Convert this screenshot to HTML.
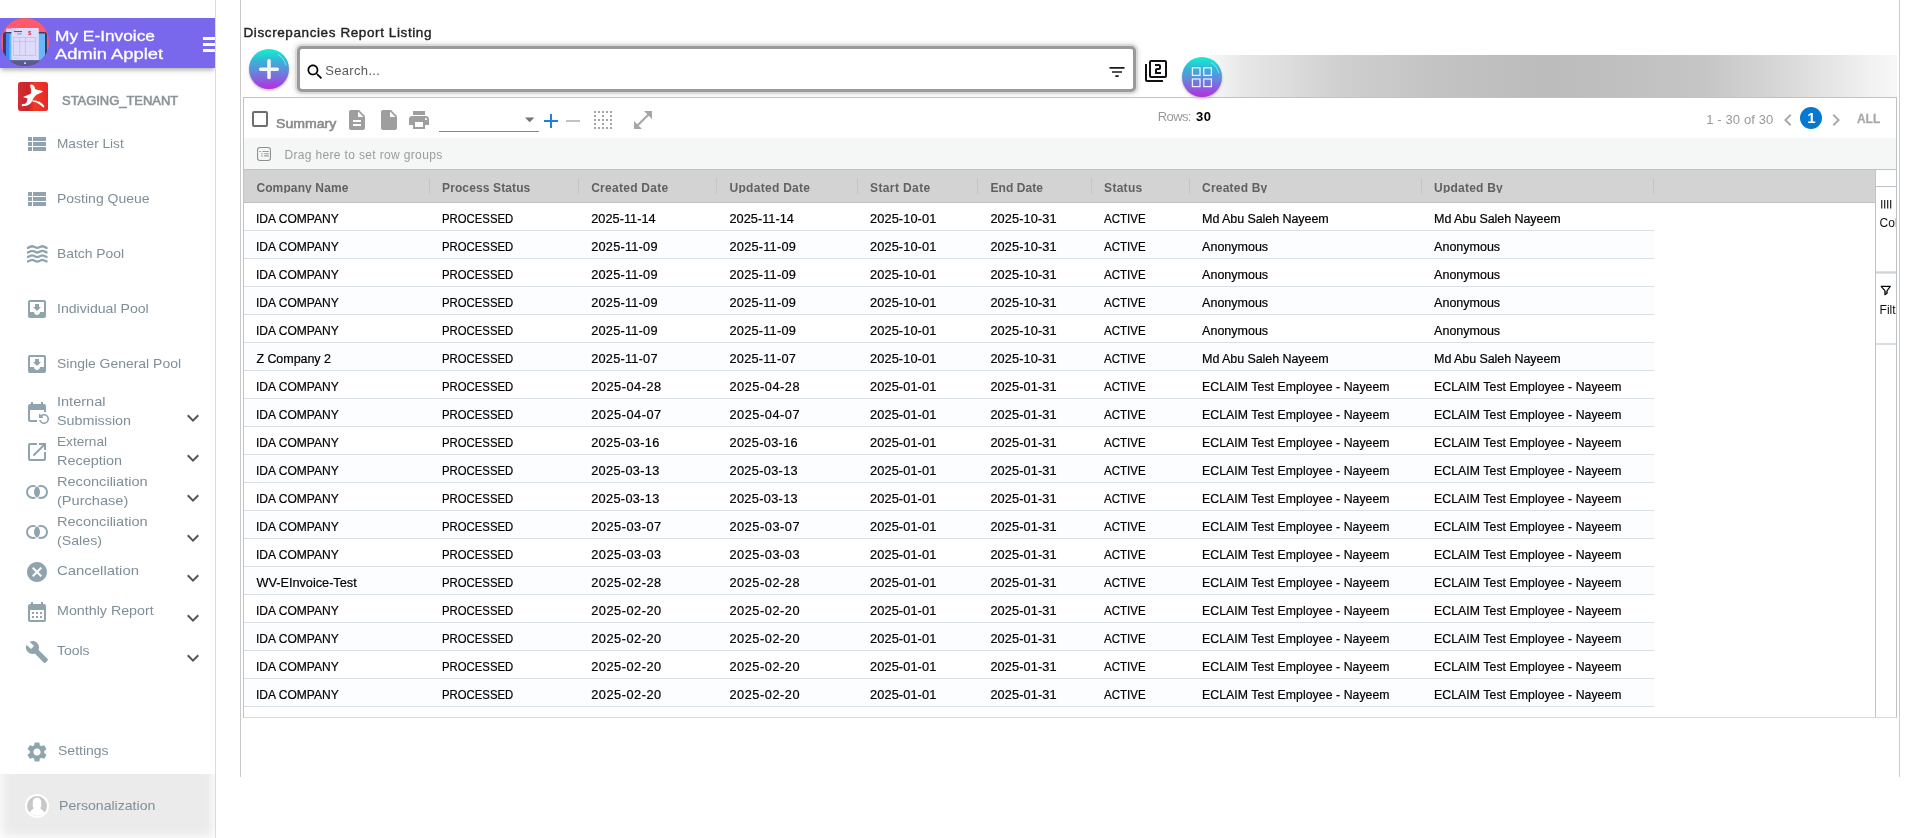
<!DOCTYPE html>
<html lang="en"><head><meta charset="utf-8"><title>Discrepancies Report Listing</title>
<style>
*{box-sizing:border-box;margin:0;padding:0}
html,body{width:1920px;height:838px;overflow:hidden;background:#fff}
body{position:relative;font-family:"Liberation Sans",sans-serif;font-size:12px;color:#000}
.t{position:absolute;white-space:nowrap;line-height:20px;height:20px}
.a{position:absolute}
svg{position:absolute;overflow:visible}
#root{position:absolute;left:0;top:0;width:1920px;height:838px;will-change:transform}
.c{-webkit-text-stroke:.2px #000}

</style></head>
<body>
<div id="root">
<div class="a" style="left:215px;top:0;width:1px;height:838px;background:#dcdcdc"></div>
<div class="a" style="left:0;top:0;width:215px;height:90px;overflow:hidden"><div class="a" style="left:0;top:18px;width:215px;height:50px;background:#7a68ec;box-shadow:0 3px 4px -1px rgba(0,0,0,.26),0 4px 6px 0 rgba(0,0,0,.06)"></div></div>
<svg style="left:1px;top:18px" width="48" height="48" viewBox="1 18 48 48">
<defs><clipPath id="avc"><circle cx="25" cy="42" r="24"/></clipPath></defs>
<g clip-path="url(#avc)">
<rect x="0" y="17" width="50" height="50" fill="#fe5a69"/>
<rect x="3" y="32" width="44" height="36" rx="3" fill="#3b3a5e"/>
<rect x="6" y="33.5" width="39" height="28" fill="#69b8ff"/>
<rect x="6" y="33.5" width="3.4" height="28" fill="#3d86fb"/>
<rect x="11.4" y="28" width="27.4" height="32.2" rx="1" fill="#dfdcfb"/>
<path d="M6.200 28.400h6v3.600h-6z" fill="#d6d3f8"/><path d="M11.400 29a1 1 0 0 1 1-1h3.600v3.600h-4.600z" fill="#cfccf6"/>
<rect x="14" y="31" width="8" height="1.1" fill="#e2203e"/>
<rect x="17" y="33.3" width="4.8" height="1.3" fill="#6fb2ff"/>
<text x="28" y="35" font-family="Liberation Sans, sans-serif" font-size="6" font-weight="700" fill="#e2203e">$</text>
<g fill="none" stroke="#bcb8ee" stroke-width=".7"><rect x="13.4" y="37.4" width="22.3" height="18"/><path d="M19.7 37.4v18M25.4 37.4v18M13.4 41.4h22.3"/></g>
<rect x="13.4" y="57.8" width="7.4" height=".6" fill="#c3bff0"/>
<rect x="0" y="60.2" width="50" height="8" fill="#5c5b8c"/>
<circle cx="25" cy="63.1" r=".9" fill="#fff"/>
</g></svg>
<span id="t1" class="t" style="left:55px;top:25px;font-size:15px;line-height:21px;height:21px;color:#fff;transform:scaleX(1.1534);transform-origin:0 0;-webkit-text-stroke:.3px #fff;">My E-Invoice</span>
<span id="t2" class="t" style="left:55px;top:43px;font-size:15px;line-height:21px;height:21px;color:#fff;transform:scaleX(1.2218);transform-origin:0 0;-webkit-text-stroke:.3px #fff;">Admin Applet</span>
<div class="a" style="left:203px;top:37px;width:12px;height:3px;background:#fff"></div>
<div class="a" style="left:203px;top:43px;width:12px;height:3px;background:#fff"></div>
<div class="a" style="left:203px;top:49px;width:12px;height:3px;background:#fff"></div>
<svg style="left:18px;top:81.5px" width="30" height="29" viewBox="0 0 30 29">
<defs><linearGradient id="tlg" x1="0" x2="1" y1="0" y2="0"><stop offset="0" stop-color="#d42d34"/><stop offset=".35" stop-color="#c9232b"/><stop offset=".55" stop-color="#ee3a28"/><stop offset="1" stop-color="#e72826"/></linearGradient></defs>
<rect width="30" height="29" rx="2.5" fill="url(#tlg)"/>
<g transform="translate(-8.1,-5.5) scale(.0501)"><path fill="#fff" d="M410,160 C450,150 500,180 505,255 C560,270 620,280 662,292 C650,320 560,335 510,385 C480,420 460,450 448,478 C520,470 640,500 690,595 L668,622 C620,570 540,510 440,492 C420,540 380,590 240,592 L236,560 L262,542 C280,552 310,550 330,520 C345,490 350,460 352,440 L262,410 C290,385 380,370 415,345 C435,320 425,260 405,185 Z"/></g>
</svg>
<span id="t3" class="t" style="left:62.4px;top:92px;font-size:12.5px;line-height:18px;height:18px;color:#8a9499;transform:scaleX(1.0349);transform-origin:0 0;-webkit-text-stroke:.6px #8a9499;">STAGING_TENANT</span>
<svg style="left:24.8px;top:131.6px;" width="24" height="24" viewBox="0 0 24 24"><path fill="#90a4ae" d="M3 14h4v-4H3v4zm0 5h4v-4H3v4zM3 9h4V5H3v4zm5 5h13v-4H8v4zm0 5h13v-4H8v4zM8 5v4h13V5H8z"/></svg>
<span id="t4" class="t" style="left:57.4px;top:134px;font-size:13px;line-height:19px;height:19px;color:#7f8f98;transform:scaleX(1.0491);transform-origin:0 0;">Master List</span>
<svg style="left:24.8px;top:186.6px;" width="24" height="24" viewBox="0 0 24 24"><path fill="#90a4ae" d="M3 14h4v-4H3v4zm0 5h4v-4H3v4zM3 9h4V5H3v4zm5 5h13v-4H8v4zm0 5h13v-4H8v4zM8 5v4h13V5H8z"/></svg>
<span id="t5" class="t" style="left:57.4px;top:189px;font-size:13px;line-height:19px;height:19px;color:#7f8f98;transform:scaleX(1.0765);transform-origin:0 0;">Posting Queue</span>
<svg style="left:26.8px;top:245px" width="21" height="19" viewBox="0 0 21 19"><g fill="none" stroke="#90a4ae" stroke-width="2.3"><path d="M0 2.95C1.700 2.95 3.400 1.25 5.125 1.25S8.500 2.95 10.250 2.95S13.700 1.25 15.375 1.25S18.800 2.95 20.500 2.95"/><path d="M0 7.50C1.700 7.50 3.400 5.80 5.125 5.80S8.500 7.50 10.250 7.50S13.700 5.80 15.375 5.80S18.800 7.50 20.500 7.50"/><path d="M0 12.05C1.700 12.05 3.400 10.35 5.125 10.35S8.500 12.05 10.250 12.05S13.700 10.35 15.375 10.35S18.800 12.05 20.500 12.05"/><path d="M0 16.60C1.700 16.60 3.400 14.90 5.125 14.90S8.500 16.60 10.250 16.60S13.700 14.90 15.375 14.90S18.800 16.60 20.500 16.60"/></g></svg>
<span id="t6" class="t" style="left:57.4px;top:244px;font-size:13px;line-height:19px;height:19px;color:#7f8f98;transform:scaleX(1.0656);transform-origin:0 0;">Batch Pool</span>
<svg style="left:24.8px;top:296.6px;" width="24" height="24" viewBox="0 0 24 24"><path fill="#90a4ae" d="M19 3H4.99c-1.11 0-1.98.9-1.98 2L3 19c0 1.1.88 2 1.99 2H19c1.1 0 2-.9 2-2V5c0-1.1-.9-2-2-2zm0 12h-4c0 1.66-1.35 3-3 3s-3-1.34-3-3H4.99V5H19v10zm-3-5h-2V7h-4v3H8l4 4 4-4z"/></svg>
<span id="t7" class="t" style="left:57.4px;top:299px;font-size:13px;line-height:19px;height:19px;color:#7f8f98;transform:scaleX(1.0844);transform-origin:0 0;">Individual Pool</span>
<svg style="left:24.8px;top:351.6px;" width="24" height="24" viewBox="0 0 24 24"><path fill="#90a4ae" d="M19 3H4.99c-1.11 0-1.98.9-1.98 2L3 19c0 1.1.88 2 1.99 2H19c1.1 0 2-.9 2-2V5c0-1.1-.9-2-2-2zm0 12h-4c0 1.66-1.35 3-3 3s-3-1.34-3-3H4.99V5H19v10zm-3-5h-2V7h-4v3H8l4 4 4-4z"/></svg>
<span id="t8" class="t" style="left:57.4px;top:354px;font-size:13px;line-height:19px;height:19px;color:#7f8f98;transform:scaleX(1.0723);transform-origin:0 0;">Single General Pool</span>
<svg style="left:25px;top:399.6px;" width="24" height="24" viewBox="0 0 24 24"><path fill="#90a4ae" d="M21 12V6c0-1.1-.9-2-2-2h-1V2h-2v2H8V2H6v2H5c-1.1 0-2 .9-2 2v14c0 1.1.9 2 2 2h7v-2H5V10h14v2h2zm-5.36 8c.43 1.45 1.77 2.5 3.36 2.5 1.93 0 3.5-1.57 3.5-3.5s-1.57-3.5-3.5-3.5c-.95 0-1.82.38-2.45 1H18V18h-4v-4h1.5v1.43c.9-.88 2.14-1.43 3.5-1.43 2.76 0 5 2.24 5 5s-2.24 5-5 5c-2.42 0-4.44-1.72-4.9-4h1.54z"/></svg>
<span id="t9" class="t" style="left:57.4px;top:392px;font-size:13px;line-height:19px;height:19px;color:#7f8f98;transform:scaleX(1.1182);transform-origin:0 0;">Internal</span>
<span id="t10" class="t" style="left:57.4px;top:411px;font-size:13px;line-height:19px;height:19px;color:#7f8f98;transform:scaleX(1.1011);transform-origin:0 0;">Submission</span>
<svg style="left:180.9px;top:406.4px;" width="24" height="24" viewBox="0 0 24 24"><path fill="#555" d="M16.59 8.59L12 13.17 7.41 8.59 6 10l6 6 6-6z"/></svg>
<svg style="left:25px;top:439.6px;" width="24" height="24" viewBox="0 0 24 24"><path fill="#90a4ae" d="M19 19H5V5h7V3H5c-1.11 0-2 .9-2 2v14c0 1.1.89 2 2 2h14c1.1 0 2-.9 2-2v-7h-2v7zM14 3v2h3.59l-9.83 9.83 1.41 1.41L19 6.41V10h2V3h-7z"/></svg>
<span id="t11" class="t" style="left:57.4px;top:432px;font-size:13px;line-height:19px;height:19px;color:#7f8f98;transform:scaleX(1.0481);transform-origin:0 0;">External</span>
<span id="t12" class="t" style="left:57.4px;top:451px;font-size:13px;line-height:19px;height:19px;color:#7f8f98;transform:scaleX(1.1102);transform-origin:0 0;">Reception</span>
<svg style="left:180.9px;top:446.4px;" width="24" height="24" viewBox="0 0 24 24"><path fill="#555" d="M16.59 8.59L12 13.17 7.41 8.59 6 10l6 6 6-6z"/></svg>
<svg style="left:25px;top:479.6px" width="24" height="24" viewBox="0 0 24 24"><g fill="none" stroke="#90a4ae" stroke-width="2"><circle cx="8" cy="12" r="6"/><circle cx="16" cy="12" r="6"/></g><path d="M12 6.255A7 7 0 0 1 12 17.745A7 7 0 0 1 12 6.255Z" fill="#fff" stroke="#fff" stroke-width="1.7"/><path d="M12 6.255A7 7 0 0 1 12 17.745A7 7 0 0 1 12 6.255Z" fill="#90a4ae"/></svg>
<span id="t13" class="t" style="left:57.4px;top:472px;font-size:13px;line-height:19px;height:19px;color:#7f8f98;transform:scaleX(1.1206);transform-origin:0 0;">Reconciliation</span>
<span id="t14" class="t" style="left:57.4px;top:491px;font-size:13px;line-height:19px;height:19px;color:#7f8f98;transform:scaleX(1.1215);transform-origin:0 0;">(Purchase)</span>
<svg style="left:180.9px;top:486.4px;" width="24" height="24" viewBox="0 0 24 24"><path fill="#555" d="M16.59 8.59L12 13.17 7.41 8.59 6 10l6 6 6-6z"/></svg>
<svg style="left:25px;top:519.6px" width="24" height="24" viewBox="0 0 24 24"><g fill="none" stroke="#90a4ae" stroke-width="2"><circle cx="8" cy="12" r="6"/><circle cx="16" cy="12" r="6"/></g><path d="M12 6.255A7 7 0 0 1 12 17.745A7 7 0 0 1 12 6.255Z" fill="#fff" stroke="#fff" stroke-width="1.7"/><path d="M12 6.255A7 7 0 0 1 12 17.745A7 7 0 0 1 12 6.255Z" fill="#90a4ae"/></svg>
<span id="t15" class="t" style="left:57.4px;top:512px;font-size:13px;line-height:19px;height:19px;color:#7f8f98;transform:scaleX(1.1206);transform-origin:0 0;">Reconciliation</span>
<span id="t16" class="t" style="left:57.4px;top:531px;font-size:13px;line-height:19px;height:19px;color:#7f8f98;transform:scaleX(1.0926);transform-origin:0 0;">(Sales)</span>
<svg style="left:180.9px;top:526.4px;" width="24" height="24" viewBox="0 0 24 24"><path fill="#555" d="M16.59 8.59L12 13.17 7.41 8.59 6 10l6 6 6-6z"/></svg>
<svg style="left:25px;top:559.8px;" width="24" height="24" viewBox="0 0 24 24"><path fill="#90a4ae" d="M12 2C6.47 2 2 6.47 2 12s4.47 10 10 10 10-4.47 10-10S17.53 2 12 2zm5 13.59L15.59 17 12 13.41 8.41 17 7 15.59 10.59 12 7 8.41 8.41 7 12 10.59 15.59 7 17 8.41 13.41 12 17 15.59z"/></svg>
<span id="t17" class="t" style="left:57.4px;top:561px;font-size:13px;line-height:19px;height:19px;color:#7f8f98;transform:scaleX(1.1461);transform-origin:0 0;">Cancellation</span>
<svg style="left:180.9px;top:566.4px;" width="24" height="24" viewBox="0 0 24 24"><path fill="#555" d="M16.59 8.59L12 13.17 7.41 8.59 6 10l6 6 6-6z"/></svg>
<svg style="left:25px;top:599.8px;" width="24" height="24" viewBox="0 0 24 24"><path fill="#90a4ae" d="M19 4h-1V2h-2v2H8V2H6v2H5c-1.11 0-1.99.9-1.99 2L3 20c0 1.1.89 2 2 2h14c1.1 0 2-.9 2-2V6c0-1.1-.9-2-2-2zm0 16H5V10h14v10zM9 14H7v-2h2v2zm4 0h-2v-2h2v2zm4 0h-2v-2h2v2zm-8 4H7v-2h2v2zm4 0h-2v-2h2v2zm4 0h-2v-2h2v2z"/></svg>
<span id="t18" class="t" style="left:57.4px;top:601px;font-size:13px;line-height:19px;height:19px;color:#7f8f98;transform:scaleX(1.0969);transform-origin:0 0;">Monthly Report</span>
<svg style="left:180.9px;top:606.4px;" width="24" height="24" viewBox="0 0 24 24"><path fill="#555" d="M16.59 8.59L12 13.17 7.41 8.59 6 10l6 6 6-6z"/></svg>
<svg style="left:25px;top:639.8px;" width="24" height="24" viewBox="0 0 24 24"><path fill="#90a4ae" d="M22.7 19l-9.1-9.1c.9-2.3.4-5-1.5-6.9-2-2-5-2.4-7.4-1.3L9 6 6 9 1.6 4.7C.4 7.1.9 10.1 2.9 12.1c1.9 1.9 4.6 2.4 6.9 1.5l9.1 9.1c.4.4 1 .4 1.4 0l2.3-2.3c.5-.4.5-1.1.1-1.4z"/></svg>
<span id="t19" class="t" style="left:57.4px;top:641px;font-size:13px;line-height:19px;height:19px;color:#7f8f98;transform:scaleX(1.0738);transform-origin:0 0;">Tools</span>
<svg style="left:180.9px;top:646.4px;" width="24" height="24" viewBox="0 0 24 24"><path fill="#555" d="M16.59 8.59L12 13.17 7.41 8.59 6 10l6 6 6-6z"/></svg>
<svg style="left:25px;top:739.6px;" width="24" height="24" viewBox="0 0 24 24"><path fill="#90a4ae" d="M19.14 12.94c.04-.3.06-.61.06-.94 0-.32-.02-.64-.07-.94l2.03-1.58c.18-.14.23-.41.12-.61l-1.92-3.32c-.12-.22-.37-.29-.59-.22l-2.39.96c-.5-.38-1.03-.7-1.62-.94l-.36-2.54c-.04-.24-.24-.41-.48-.41h-3.84c-.24 0-.43.17-.47.41l-.36 2.54c-.59.24-1.13.57-1.62.94l-2.39-.96c-.22-.08-.47 0-.59.22L2.74 8.87c-.12.21-.08.47.12.61l2.03 1.58c-.05.3-.09.63-.09.94s.02.64.07.94l-2.03 1.58c-.18.14-.23.41-.12.61l1.92 3.32c.12.22.37.29.59.22l2.39-.96c.5.38 1.03.7 1.62.94l.36 2.54c.05.24.24.41.48.41h3.84c.24 0 .44-.17.47-.41l.36-2.54c.59-.24 1.13-.56 1.62-.94l2.39.96c.22.08.47 0 .59-.22l1.92-3.32c.12-.22.07-.47-.12-.61l-2.01-1.58zM12 15.6c-1.98 0-3.6-1.62-3.6-3.6s1.62-3.6 3.6-3.6 3.6 1.62 3.6 3.6-1.62 3.6-3.6 3.6z"/></svg>
<span id="t20" class="t" style="left:57.5px;top:741px;font-size:13px;line-height:19px;height:19px;color:#7f8f98;transform:scaleX(1.0770);transform-origin:0 0;">Settings</span>
<div class="a" style="left:0;top:774px;width:215px;height:64px;overflow:hidden"><div class="a" style="left:2px;top:-40px;width:211px;height:103px;background:#ebebeb;filter:blur(5px)"></div></div>
<svg style="left:25.1px;top:793.6px" width="24" height="24" viewBox="0 0 24 24"><defs><clipPath id="pc"><circle cx="12" cy="12" r="10"/></clipPath></defs><circle cx="12" cy="12" r="12" fill="#fff"/><circle cx="12" cy="12" r="10" fill="#c8c8c8"/><g clip-path="url(#pc)" fill="#fff"><path d="M7.800 13V7.800a4.200 4.200 0 0 1 8.400 0V13z"/><path d="M8.300 12.500L8.600 14.200L3.500 19.300V24H20.500V19.300L15.400 14.200L15.700 12.500z"/></g></svg>
<span id="t21" class="t" style="left:59.4px;top:796px;font-size:13px;line-height:19px;height:19px;color:#7f8f98;transform:scaleX(1.0834);transform-origin:0 0;">Personalization</span>
<div class="a" style="left:240px;top:0;width:1px;height:777px;background:#c9c9c9"></div>
<div class="a" style="left:1899px;top:0;width:1px;height:777px;background:#cdcdcd"></div>
<span id="t22" class="t" style="left:243.5px;top:23px;font-size:13.5px;line-height:19px;height:19px;color:#222;letter-spacing:0.598px;-webkit-text-stroke:.4px #222;">Discrepancies Report Listing</span>
<div class="a" style="left:1196px;top:55px;width:701px;height:42px;background:linear-gradient(90deg,#fff 0,#e8e8e8 6.4%,#cfcfcf 21%,#c2c2c2 35.6%,#bcbcbc 50%,#c1c1c1 64%,#c6c6c6 73%,#dadada 85%,#efefef 95%,#f8f8f8 100%)"></div>
<svg style="left:245px;top:44.9px" width="48" height="50" viewBox="-24 -24 48 50"><defs><linearGradient id="g1" x1="0" x2="0" y1="0" y2="1"><stop offset="0" stop-color="#10f2d0"/><stop offset=".28" stop-color="#35b6d6"/><stop offset=".52" stop-color="#5d8edc"/><stop offset=".76" stop-color="#8a5fde"/><stop offset="1" stop-color="#b82be4"/></linearGradient><filter id="g1f" x="-30%" y="-30%" width="160%" height="170%"><feGaussianBlur stdDeviation="1.6"/></filter></defs><circle cx="0" cy="1.8" r="19.5" fill="#000" opacity=".32" filter="url(#g1f)"/><circle cx="0" cy="0" r="20" fill="url(#g1)"/><path d="M9.5 -14.4A17.3 17.3 0 0 1 16.9 -4" fill="none" stroke="#9ff" stroke-opacity=".75" stroke-width=".9" stroke-linecap="round"/><path d="M-8.3 .2H8.300M0 -8.100V8.500" stroke="#f5f5f5" stroke-width="3.600" stroke-linecap="round" fill="none"/></svg>
<div class="a" style="left:297px;top:46px;width:839px;height:45.5px;background:#fff;border:3px solid #9a9a9a;border-radius:5px;box-shadow:0 0 0 2px #dadada,0 0 4px 3px rgba(0,0,0,.1)"></div>
<svg style="left:304.7px;top:61.6px;" width="20" height="20" viewBox="0 0 24 24"><path fill="#000" d="M15.5 14h-.79l-.28-.27C15.41 12.59 16 11.11 16 9.5 16 5.91 13.09 3 9.5 3S3 5.91 3 9.5 5.91 16 9.5 16c1.61 0 3.09-.59 4.23-1.57l.27.28v.79l5 4.99L20.49 19l-4.99-5zm-6 0C7.01 14 5 11.99 5 9.5S7.01 5 9.5 5 14 7.01 14 9.5 11.99 14 9.5 14z"/></svg>
<span id="t23" class="t" style="left:325.2px;top:61px;font-size:13px;line-height:19px;height:19px;color:#5a5a5a;letter-spacing:0.334px;">Search...</span>
<svg style="left:1106.8px;top:61.8px;" width="20" height="20" viewBox="0 0 24 24"><path fill="#1a1a1a" d="M10 18h4v-2h-4v2zM3 6v2h18V6H3zm3 7h12v-2H6v2z"/></svg>
<svg style="left:1144px;top:58.7px;" width="24" height="24" viewBox="0 0 24 24"><path fill="#111" d="M3 5H1v16c0 1.1.9 2 2 2h16v-2H3V5zm18-4H7c-1.1 0-2 .9-2 2v14c0 1.1.9 2 2 2h14c1.1 0 2-.9 2-2V3c0-1.1-.9-2-2-2zm0 16H7V3h14v14zm-4-4h-4v-2h2c1.1 0 2-.89 2-2V7c0-1.11-.9-2-2-2h-4v2h4v2h-2c-1.1 0-2 .89-2 2v4h6v-2z"/></svg>
<svg style="left:1178px;top:52.7px" width="48" height="50" viewBox="-24 -24 48 50"><defs><linearGradient id="g2" x1="0" x2="0" y1="0" y2="1"><stop offset="0" stop-color="#10f2d0"/><stop offset=".28" stop-color="#35b6d6"/><stop offset=".52" stop-color="#5d8edc"/><stop offset=".76" stop-color="#8a5fde"/><stop offset="1" stop-color="#b82be4"/></linearGradient><filter id="g2f" x="-30%" y="-30%" width="160%" height="170%"><feGaussianBlur stdDeviation="1.6"/></filter></defs><circle cx="0" cy="1.8" r="19.5" fill="#000" opacity=".32" filter="url(#g2f)"/><circle cx="0" cy="0" r="20" fill="url(#g2)"/><path d="M9.5 -14.4A17.3 17.3 0 0 1 16.9 -4" fill="none" stroke="#9ff" stroke-opacity=".75" stroke-width=".9" stroke-linecap="round"/><g fill="none" stroke="#fff" stroke-opacity=".88" stroke-width="1.25"><rect x="-9.6" y="-9.2" width="7.6" height="7.6"/><rect x="-9.6" y="2" width="7.6" height="7.6"/><rect x="1.8" y="-9.2" width="7.6" height="7.6"/><rect x="1.8" y="2" width="7.6" height="7.6"/></g></svg>
<div class="a" style="left:243px;top:97px;width:1654px;height:621px;border:1px solid #bdc3c7;border-bottom-color:#d4d9de"></div>
<div class="a" style="left:252px;top:111px;width:16px;height:16px;border:2px solid #6e6e6e;border-radius:2px"></div>
<span id="t24" class="t" style="left:276.3px;top:115px;font-size:12.5px;line-height:18px;height:18px;color:#8a8a8a;transform:scaleX(1.1256);transform-origin:0 0;-webkit-text-stroke:.55px #8a8a8a;">Summary</span>
<svg style="left:345px;top:108px;" width="24" height="24" viewBox="0 0 24 24"><path fill="#9e9e9e" d="M14 2H6c-1.1 0-1.99.9-1.99 2L4 20c0 1.1.89 2 1.99 2H18c1.1 0 2-.9 2-2V8l-6-6zm2 16H8v-2h8v2zm0-4H8v-2h8v2zm-3-5V3.5L18.5 9H13z"/></svg>
<svg style="left:376.8px;top:108px;" width="24" height="24" viewBox="0 0 24 24"><path fill="#9e9e9e" d="M6 2c-1.1 0-1.99.9-1.99 2L4 20c0 1.1.89 2 1.99 2H18c1.1 0 2-.9 2-2V8l-6-6H6zm7 7V3.5L18.5 9H13z"/></svg>
<svg style="left:406.7px;top:108px;" width="24" height="24" viewBox="0 0 24 24"><path fill="#9e9e9e" d="M19 8H5c-1.66 0-3 1.34-3 3v6h4v4h12v-4h4v-6c0-1.66-1.34-3-3-3zm-3 11H8v-5h8v5zm3-7c-.55 0-1-.45-1-1s.45-1 1-1 1 .45 1 1-.45 1-1 1zm-1-9H6v4h12V3z"/></svg>
<div class="a" style="left:438.5px;top:131px;width:100px;height:1px;background:#8a8a8a"></div>
<svg style="left:524px;top:116px" width="12" height="8" viewBox="524 116 12 8"><path d="M525 117.500h9.400l-4.700 4.800z" fill="#757575"/></svg>
<svg style="left:538.8px;top:108.9px;" width="24" height="24" viewBox="0 0 24 24"><path fill="#1a80e2" d="M19 13h-6v6h-2v-6H5v-2h6V5h2v6h6v2z"/></svg>
<svg style="left:560.8px;top:108.9px;" width="24" height="24" viewBox="0 0 24 24"><path fill="#c2c2c2" d="M19 13H5v-2h14v2z"/></svg>
<svg style="left:590.7px;top:107.9px;" width="24" height="24" viewBox="0 0 24 24"><path fill="#a6a6a6" d="M7 5h2V3H7v2zm0 8h2v-2H7v2zm0 8h2v-2H7v2zm4-4h2v-2h-2v2zm0 4h2v-2h-2v2zm-8 0h2v-2H3v2zm0-4h2v-2H3v2zm0-4h2v-2H3v2zm0-4h2V7H3v2zm0-4h2V3H3v2zm8 8h2v-2h-2v2zm8 4h2v-2h-2v2zm0-4h2v-2h-2v2zm0 8h2v-2h-2v2zm0-12h2V7h-2v2zm-8 0h2V7h-2v2zm8-6v2h2V3h-2zm-8 2h2V3h-2v2zm4 16h2v-2h-2v2zm0-8h2v-2h-2v2zm0-8h2V3h-2v2z"/></svg>
<svg style="left:630.7px;top:107.9px;" width="24" height="24" viewBox="0 0 24 24"><path fill="#a6a6a6" d="M21 11V3h-8l3.29 3.29-10 10L3 13v8h8l-3.29-3.29 10-10z"/></svg>
<span id="t25" class="t" style="left:1157.7px;top:107px;font-size:13px;line-height:19px;height:19px;color:#9a9a9a;letter-spacing:-0.581px;">Rows:</span>
<span id="t26" class="t" style="left:1195.9px;top:107px;font-size:13px;line-height:19px;height:19px;color:#000;font-weight:700;letter-spacing:0.731px;">30</span>
<span id="t27" class="t" style="left:1706.3px;top:110px;font-size:13px;line-height:19px;height:19px;color:#999;letter-spacing:0.111px;">1 - 30 of 30</span>
<svg style="left:1776px;top:107.8px;" width="24" height="24" viewBox="0 0 24 24"><path fill="#aaa" d="M15.41 7.41L14 6l-6 6 6 6 1.41-1.41L10.83 12z"/></svg>
<div class="a" style="left:1800px;top:107px;width:22px;height:22px;border-radius:50%;background:#0678d0"></div>
<span id="t28" class="t" style="left:1807.3px;top:107px;font-size:15px;line-height:21px;height:21px;color:#fff;font-weight:700;">1</span>
<svg style="left:1824px;top:107.8px;" width="24" height="24" viewBox="0 0 24 24"><path fill="#aaa" d="M10 6L8.59 7.41 13.17 12l-4.58 4.59L10 18l6-6z"/></svg>
<span id="t29" class="t" style="left:1856.9px;top:109px;font-size:13px;line-height:19px;height:19px;color:#aaa;font-weight:700;transform:scaleX(0.9177);transform-origin:0 0;-webkit-text-stroke:.3px #aaa;">ALL</span>
<div class="a" style="left:244px;top:138px;width:1652px;height:31px;background:#f5f7f7"></div>
<svg style="left:257px;top:147px" width="14" height="14" viewBox="0 0 14 14"><rect x=".55" y=".55" width="12.900" height="12.900" rx="2.500" fill="none" stroke="#8f8f8f" stroke-width="1.100"/><path d="M2.200 4.500h1.600M5.300 4.500h6.500M4.300 6.800h1.400M7.200 6.800h4.600M4.300 8.900h1.400M7.200 8.900h4.600" stroke="#9a9a9a" stroke-width="1.100" fill="none"/></svg>
<span id="t30" class="t" style="left:284.4px;top:146px;font-size:12px;line-height:18px;height:18px;color:#9b9b9b;letter-spacing:0.348px;">Drag here to set row groups</span>
<div class="a" style="left:244px;top:169px;width:1652px;height:1px;background:#bdc3c7"></div>
<div class="a" style="left:244px;top:170px;width:1631px;height:32px;background:#d3d3d3"></div>
<div class="a" style="left:244px;top:202px;width:1631px;height:1px;background:#bdc3c7"></div>
<div class="a" style="left:429px;top:178px;width:1px;height:16px;background:#c3c7cb"></div>
<div class="a" style="left:578px;top:178px;width:1px;height:16px;background:#c3c7cb"></div>
<div class="a" style="left:716px;top:178px;width:1px;height:16px;background:#c3c7cb"></div>
<div class="a" style="left:857px;top:178px;width:1px;height:16px;background:#c3c7cb"></div>
<div class="a" style="left:977px;top:178px;width:1px;height:16px;background:#c3c7cb"></div>
<div class="a" style="left:1091px;top:178px;width:1px;height:16px;background:#c3c7cb"></div>
<div class="a" style="left:1189px;top:178px;width:1px;height:16px;background:#c3c7cb"></div>
<div class="a" style="left:1421px;top:178px;width:1px;height:16px;background:#c3c7cb"></div>
<div class="a" style="left:1653px;top:178px;width:1px;height:16px;background:#c3c7cb"></div>
<span id="t31" class="t" style="left:256.4px;top:179px;font-size:12px;line-height:18px;height:18px;color:#616161;font-weight:700;letter-spacing:0.118px;height:13.6px;overflow:hidden;">Company Name</span>
<span id="t32" class="t" style="left:442px;top:179px;font-size:12px;line-height:18px;height:18px;color:#616161;font-weight:700;letter-spacing:0.122px;height:13.6px;overflow:hidden;">Process Status</span>
<span id="t33" class="t" style="left:591.2px;top:179px;font-size:12px;line-height:18px;height:18px;color:#616161;font-weight:700;letter-spacing:0.270px;height:13.6px;overflow:hidden;">Created Date</span>
<span id="t34" class="t" style="left:729.5px;top:179px;font-size:12px;line-height:18px;height:18px;color:#616161;font-weight:700;letter-spacing:0.287px;height:13.6px;overflow:hidden;">Updated Date</span>
<span id="t35" class="t" style="left:870px;top:179px;font-size:12px;line-height:18px;height:18px;color:#616161;font-weight:700;letter-spacing:0.390px;height:13.6px;overflow:hidden;">Start Date</span>
<span id="t36" class="t" style="left:990.4px;top:179px;font-size:12px;line-height:18px;height:18px;color:#616161;font-weight:700;letter-spacing:0.083px;height:13.6px;overflow:hidden;">End Date</span>
<span id="t37" class="t" style="left:1104.1px;top:179px;font-size:12px;line-height:18px;height:18px;color:#616161;font-weight:700;letter-spacing:0.283px;height:13.6px;overflow:hidden;">Status</span>
<span id="t38" class="t" style="left:1202.1px;top:179px;font-size:12px;line-height:18px;height:18px;color:#616161;font-weight:700;letter-spacing:0.205px;height:13.6px;overflow:hidden;">Created By</span>
<span id="t39" class="t" style="left:1434.1px;top:179px;font-size:12px;line-height:18px;height:18px;color:#616161;font-weight:700;letter-spacing:0.224px;height:13.6px;overflow:hidden;">Updated By</span>
<div class="a" style="left:244px;top:203px;width:1410px;height:28px;background:#fff;border-bottom:1px solid #dadfe5"></div>
<span id="t40" class="t c" style="left:256.4px;top:210px;font-size:12.25px;line-height:18px;height:18px;color:#000;transform:scaleX(0.9823);transform-origin:0 0;">IDA COMPANY</span>
<span id="t41" class="t c" style="left:442px;top:210px;font-size:12.25px;line-height:18px;height:18px;color:#000;transform:scaleX(0.9256);transform-origin:0 0;">PROCESSED</span>
<span id="t42" class="t c" style="left:591.2px;top:209px;font-size:12.75px;line-height:19px;height:19px;color:#000;letter-spacing:0.019px;">2025-11-14</span>
<span id="t43" class="t c" style="left:729.5px;top:209px;font-size:12.75px;line-height:19px;height:19px;color:#000;letter-spacing:0.019px;">2025-11-14</span>
<span id="t44" class="t c" style="left:870px;top:209px;font-size:12.75px;line-height:19px;height:19px;color:#000;letter-spacing:0.118px;">2025-10-01</span>
<span id="t45" class="t c" style="left:990.4px;top:209px;font-size:12.75px;line-height:19px;height:19px;color:#000;letter-spacing:0.118px;">2025-10-31</span>
<span id="t46" class="t c" style="left:1104.1px;top:210px;font-size:12.25px;line-height:18px;height:18px;color:#000;transform:scaleX(0.9401);transform-origin:0 0;">ACTIVE</span>
<span id="t47" class="t c" style="left:1202.1px;top:210px;font-size:12.5px;line-height:18px;height:18px;color:#000;letter-spacing:-0.070px;">Md Abu Saleh Nayeem</span>
<span id="t48" class="t c" style="left:1434.1px;top:210px;font-size:12.5px;line-height:18px;height:18px;color:#000;letter-spacing:-0.070px;">Md Abu Saleh Nayeem</span>
<div class="a" style="left:244px;top:231px;width:1410px;height:28px;background:#fcfdfe;border-bottom:1px solid #dadfe5"></div>
<span id="t49" class="t c" style="left:256.4px;top:238px;font-size:12.25px;line-height:18px;height:18px;color:#000;transform:scaleX(0.9823);transform-origin:0 0;">IDA COMPANY</span>
<span id="t50" class="t c" style="left:442px;top:238px;font-size:12.25px;line-height:18px;height:18px;color:#000;transform:scaleX(0.9256);transform-origin:0 0;">PROCESSED</span>
<span id="t51" class="t c" style="left:591.2px;top:237px;font-size:12.75px;line-height:19px;height:19px;color:#000;letter-spacing:0.224px;">2025-11-09</span>
<span id="t52" class="t c" style="left:729.5px;top:237px;font-size:12.75px;line-height:19px;height:19px;color:#000;letter-spacing:0.224px;">2025-11-09</span>
<span id="t53" class="t c" style="left:870px;top:237px;font-size:12.75px;line-height:19px;height:19px;color:#000;letter-spacing:0.118px;">2025-10-01</span>
<span id="t54" class="t c" style="left:990.4px;top:237px;font-size:12.75px;line-height:19px;height:19px;color:#000;letter-spacing:0.118px;">2025-10-31</span>
<span id="t55" class="t c" style="left:1104.1px;top:238px;font-size:12.25px;line-height:18px;height:18px;color:#000;transform:scaleX(0.9401);transform-origin:0 0;">ACTIVE</span>
<span id="t56" class="t c" style="left:1202.1px;top:238px;font-size:12.5px;line-height:18px;height:18px;color:#000;letter-spacing:-0.002px;">Anonymous</span>
<span id="t57" class="t c" style="left:1434.1px;top:238px;font-size:12.5px;line-height:18px;height:18px;color:#000;letter-spacing:-0.002px;">Anonymous</span>
<div class="a" style="left:244px;top:259px;width:1410px;height:28px;background:#fff;border-bottom:1px solid #dadfe5"></div>
<span id="t58" class="t c" style="left:256.4px;top:266px;font-size:12.25px;line-height:18px;height:18px;color:#000;transform:scaleX(0.9823);transform-origin:0 0;">IDA COMPANY</span>
<span id="t59" class="t c" style="left:442px;top:266px;font-size:12.25px;line-height:18px;height:18px;color:#000;transform:scaleX(0.9256);transform-origin:0 0;">PROCESSED</span>
<span id="t60" class="t c" style="left:591.2px;top:265px;font-size:12.75px;line-height:19px;height:19px;color:#000;letter-spacing:0.224px;">2025-11-09</span>
<span id="t61" class="t c" style="left:729.5px;top:265px;font-size:12.75px;line-height:19px;height:19px;color:#000;letter-spacing:0.224px;">2025-11-09</span>
<span id="t62" class="t c" style="left:870px;top:265px;font-size:12.75px;line-height:19px;height:19px;color:#000;letter-spacing:0.118px;">2025-10-01</span>
<span id="t63" class="t c" style="left:990.4px;top:265px;font-size:12.75px;line-height:19px;height:19px;color:#000;letter-spacing:0.118px;">2025-10-31</span>
<span id="t64" class="t c" style="left:1104.1px;top:266px;font-size:12.25px;line-height:18px;height:18px;color:#000;transform:scaleX(0.9401);transform-origin:0 0;">ACTIVE</span>
<span id="t65" class="t c" style="left:1202.1px;top:266px;font-size:12.5px;line-height:18px;height:18px;color:#000;letter-spacing:-0.002px;">Anonymous</span>
<span id="t66" class="t c" style="left:1434.1px;top:266px;font-size:12.5px;line-height:18px;height:18px;color:#000;letter-spacing:-0.002px;">Anonymous</span>
<div class="a" style="left:244px;top:287px;width:1410px;height:28px;background:#fcfdfe;border-bottom:1px solid #dadfe5"></div>
<span id="t67" class="t c" style="left:256.4px;top:294px;font-size:12.25px;line-height:18px;height:18px;color:#000;transform:scaleX(0.9823);transform-origin:0 0;">IDA COMPANY</span>
<span id="t68" class="t c" style="left:442px;top:294px;font-size:12.25px;line-height:18px;height:18px;color:#000;transform:scaleX(0.9256);transform-origin:0 0;">PROCESSED</span>
<span id="t69" class="t c" style="left:591.2px;top:293px;font-size:12.75px;line-height:19px;height:19px;color:#000;letter-spacing:0.224px;">2025-11-09</span>
<span id="t70" class="t c" style="left:729.5px;top:293px;font-size:12.75px;line-height:19px;height:19px;color:#000;letter-spacing:0.224px;">2025-11-09</span>
<span id="t71" class="t c" style="left:870px;top:293px;font-size:12.75px;line-height:19px;height:19px;color:#000;letter-spacing:0.118px;">2025-10-01</span>
<span id="t72" class="t c" style="left:990.4px;top:293px;font-size:12.75px;line-height:19px;height:19px;color:#000;letter-spacing:0.118px;">2025-10-31</span>
<span id="t73" class="t c" style="left:1104.1px;top:294px;font-size:12.25px;line-height:18px;height:18px;color:#000;transform:scaleX(0.9401);transform-origin:0 0;">ACTIVE</span>
<span id="t74" class="t c" style="left:1202.1px;top:294px;font-size:12.5px;line-height:18px;height:18px;color:#000;letter-spacing:-0.002px;">Anonymous</span>
<span id="t75" class="t c" style="left:1434.1px;top:294px;font-size:12.5px;line-height:18px;height:18px;color:#000;letter-spacing:-0.002px;">Anonymous</span>
<div class="a" style="left:244px;top:315px;width:1410px;height:28px;background:#fff;border-bottom:1px solid #dadfe5"></div>
<span id="t76" class="t c" style="left:256.4px;top:322px;font-size:12.25px;line-height:18px;height:18px;color:#000;transform:scaleX(0.9823);transform-origin:0 0;">IDA COMPANY</span>
<span id="t77" class="t c" style="left:442px;top:322px;font-size:12.25px;line-height:18px;height:18px;color:#000;transform:scaleX(0.9256);transform-origin:0 0;">PROCESSED</span>
<span id="t78" class="t c" style="left:591.2px;top:321px;font-size:12.75px;line-height:19px;height:19px;color:#000;letter-spacing:0.224px;">2025-11-09</span>
<span id="t79" class="t c" style="left:729.5px;top:321px;font-size:12.75px;line-height:19px;height:19px;color:#000;letter-spacing:0.224px;">2025-11-09</span>
<span id="t80" class="t c" style="left:870px;top:321px;font-size:12.75px;line-height:19px;height:19px;color:#000;letter-spacing:0.118px;">2025-10-01</span>
<span id="t81" class="t c" style="left:990.4px;top:321px;font-size:12.75px;line-height:19px;height:19px;color:#000;letter-spacing:0.118px;">2025-10-31</span>
<span id="t82" class="t c" style="left:1104.1px;top:322px;font-size:12.25px;line-height:18px;height:18px;color:#000;transform:scaleX(0.9401);transform-origin:0 0;">ACTIVE</span>
<span id="t83" class="t c" style="left:1202.1px;top:322px;font-size:12.5px;line-height:18px;height:18px;color:#000;letter-spacing:-0.002px;">Anonymous</span>
<span id="t84" class="t c" style="left:1434.1px;top:322px;font-size:12.5px;line-height:18px;height:18px;color:#000;letter-spacing:-0.002px;">Anonymous</span>
<div class="a" style="left:244px;top:343px;width:1410px;height:28px;background:#fcfdfe;border-bottom:1px solid #dadfe5"></div>
<span id="t85" class="t c" style="left:256.4px;top:350px;font-size:12.5px;line-height:18px;height:18px;color:#000;letter-spacing:-0.053px;">Z Company 2</span>
<span id="t86" class="t c" style="left:442px;top:350px;font-size:12.25px;line-height:18px;height:18px;color:#000;transform:scaleX(0.9256);transform-origin:0 0;">PROCESSED</span>
<span id="t87" class="t c" style="left:591.2px;top:349px;font-size:12.75px;line-height:19px;height:19px;color:#000;letter-spacing:0.224px;">2025-11-07</span>
<span id="t88" class="t c" style="left:729.5px;top:349px;font-size:12.75px;line-height:19px;height:19px;color:#000;letter-spacing:0.224px;">2025-11-07</span>
<span id="t89" class="t c" style="left:870px;top:349px;font-size:12.75px;line-height:19px;height:19px;color:#000;letter-spacing:0.118px;">2025-10-01</span>
<span id="t90" class="t c" style="left:990.4px;top:349px;font-size:12.75px;line-height:19px;height:19px;color:#000;letter-spacing:0.118px;">2025-10-31</span>
<span id="t91" class="t c" style="left:1104.1px;top:350px;font-size:12.25px;line-height:18px;height:18px;color:#000;transform:scaleX(0.9401);transform-origin:0 0;">ACTIVE</span>
<span id="t92" class="t c" style="left:1202.1px;top:350px;font-size:12.5px;line-height:18px;height:18px;color:#000;letter-spacing:-0.070px;">Md Abu Saleh Nayeem</span>
<span id="t93" class="t c" style="left:1434.1px;top:350px;font-size:12.5px;line-height:18px;height:18px;color:#000;letter-spacing:-0.070px;">Md Abu Saleh Nayeem</span>
<div class="a" style="left:244px;top:371px;width:1410px;height:28px;background:#fff;border-bottom:1px solid #dadfe5"></div>
<span id="t94" class="t c" style="left:256.4px;top:378px;font-size:12.25px;line-height:18px;height:18px;color:#000;transform:scaleX(0.9823);transform-origin:0 0;">IDA COMPANY</span>
<span id="t95" class="t c" style="left:442px;top:378px;font-size:12.25px;line-height:18px;height:18px;color:#000;transform:scaleX(0.9256);transform-origin:0 0;">PROCESSED</span>
<span id="t96" class="t c" style="left:591.2px;top:377px;font-size:12.75px;line-height:19px;height:19px;color:#000;letter-spacing:0.530px;">2025-04-28</span>
<span id="t97" class="t c" style="left:729.5px;top:377px;font-size:12.75px;line-height:19px;height:19px;color:#000;letter-spacing:0.530px;">2025-04-28</span>
<span id="t98" class="t c" style="left:870px;top:377px;font-size:12.75px;line-height:19px;height:19px;color:#000;letter-spacing:0.118px;">2025-01-01</span>
<span id="t99" class="t c" style="left:990.4px;top:377px;font-size:12.75px;line-height:19px;height:19px;color:#000;letter-spacing:0.118px;">2025-01-31</span>
<span id="t100" class="t c" style="left:1104.1px;top:378px;font-size:12.25px;line-height:18px;height:18px;color:#000;transform:scaleX(0.9401);transform-origin:0 0;">ACTIVE</span>
<span id="t101" class="t c" style="left:1202.1px;top:378px;font-size:12.25px;line-height:18px;height:18px;color:#000;letter-spacing:0.066px;">ECLAIM Test Employee - Nayeem</span>
<span id="t102" class="t c" style="left:1434.1px;top:378px;font-size:12.25px;line-height:18px;height:18px;color:#000;letter-spacing:0.066px;">ECLAIM Test Employee - Nayeem</span>
<div class="a" style="left:244px;top:399px;width:1410px;height:28px;background:#fcfdfe;border-bottom:1px solid #dadfe5"></div>
<span id="t103" class="t c" style="left:256.4px;top:406px;font-size:12.25px;line-height:18px;height:18px;color:#000;transform:scaleX(0.9823);transform-origin:0 0;">IDA COMPANY</span>
<span id="t104" class="t c" style="left:442px;top:406px;font-size:12.25px;line-height:18px;height:18px;color:#000;transform:scaleX(0.9256);transform-origin:0 0;">PROCESSED</span>
<span id="t105" class="t c" style="left:591.2px;top:405px;font-size:12.75px;line-height:19px;height:19px;color:#000;letter-spacing:0.530px;">2025-04-07</span>
<span id="t106" class="t c" style="left:729.5px;top:405px;font-size:12.75px;line-height:19px;height:19px;color:#000;letter-spacing:0.530px;">2025-04-07</span>
<span id="t107" class="t c" style="left:870px;top:405px;font-size:12.75px;line-height:19px;height:19px;color:#000;letter-spacing:0.118px;">2025-01-01</span>
<span id="t108" class="t c" style="left:990.4px;top:405px;font-size:12.75px;line-height:19px;height:19px;color:#000;letter-spacing:0.118px;">2025-01-31</span>
<span id="t109" class="t c" style="left:1104.1px;top:406px;font-size:12.25px;line-height:18px;height:18px;color:#000;transform:scaleX(0.9401);transform-origin:0 0;">ACTIVE</span>
<span id="t110" class="t c" style="left:1202.1px;top:406px;font-size:12.25px;line-height:18px;height:18px;color:#000;letter-spacing:0.066px;">ECLAIM Test Employee - Nayeem</span>
<span id="t111" class="t c" style="left:1434.1px;top:406px;font-size:12.25px;line-height:18px;height:18px;color:#000;letter-spacing:0.066px;">ECLAIM Test Employee - Nayeem</span>
<div class="a" style="left:244px;top:427px;width:1410px;height:28px;background:#fff;border-bottom:1px solid #dadfe5"></div>
<span id="t112" class="t c" style="left:256.4px;top:434px;font-size:12.25px;line-height:18px;height:18px;color:#000;transform:scaleX(0.9823);transform-origin:0 0;">IDA COMPANY</span>
<span id="t113" class="t c" style="left:442px;top:434px;font-size:12.25px;line-height:18px;height:18px;color:#000;transform:scaleX(0.9256);transform-origin:0 0;">PROCESSED</span>
<span id="t114" class="t c" style="left:591.2px;top:433px;font-size:12.75px;line-height:19px;height:19px;color:#000;letter-spacing:0.324px;">2025-03-16</span>
<span id="t115" class="t c" style="left:729.5px;top:433px;font-size:12.75px;line-height:19px;height:19px;color:#000;letter-spacing:0.324px;">2025-03-16</span>
<span id="t116" class="t c" style="left:870px;top:433px;font-size:12.75px;line-height:19px;height:19px;color:#000;letter-spacing:0.118px;">2025-01-01</span>
<span id="t117" class="t c" style="left:990.4px;top:433px;font-size:12.75px;line-height:19px;height:19px;color:#000;letter-spacing:0.118px;">2025-01-31</span>
<span id="t118" class="t c" style="left:1104.1px;top:434px;font-size:12.25px;line-height:18px;height:18px;color:#000;transform:scaleX(0.9401);transform-origin:0 0;">ACTIVE</span>
<span id="t119" class="t c" style="left:1202.1px;top:434px;font-size:12.25px;line-height:18px;height:18px;color:#000;letter-spacing:0.066px;">ECLAIM Test Employee - Nayeem</span>
<span id="t120" class="t c" style="left:1434.1px;top:434px;font-size:12.25px;line-height:18px;height:18px;color:#000;letter-spacing:0.066px;">ECLAIM Test Employee - Nayeem</span>
<div class="a" style="left:244px;top:455px;width:1410px;height:28px;background:#fcfdfe;border-bottom:1px solid #dadfe5"></div>
<span id="t121" class="t c" style="left:256.4px;top:462px;font-size:12.25px;line-height:18px;height:18px;color:#000;transform:scaleX(0.9823);transform-origin:0 0;">IDA COMPANY</span>
<span id="t122" class="t c" style="left:442px;top:462px;font-size:12.25px;line-height:18px;height:18px;color:#000;transform:scaleX(0.9256);transform-origin:0 0;">PROCESSED</span>
<span id="t123" class="t c" style="left:591.2px;top:461px;font-size:12.75px;line-height:19px;height:19px;color:#000;letter-spacing:0.324px;">2025-03-13</span>
<span id="t124" class="t c" style="left:729.5px;top:461px;font-size:12.75px;line-height:19px;height:19px;color:#000;letter-spacing:0.324px;">2025-03-13</span>
<span id="t125" class="t c" style="left:870px;top:461px;font-size:12.75px;line-height:19px;height:19px;color:#000;letter-spacing:0.118px;">2025-01-01</span>
<span id="t126" class="t c" style="left:990.4px;top:461px;font-size:12.75px;line-height:19px;height:19px;color:#000;letter-spacing:0.118px;">2025-01-31</span>
<span id="t127" class="t c" style="left:1104.1px;top:462px;font-size:12.25px;line-height:18px;height:18px;color:#000;transform:scaleX(0.9401);transform-origin:0 0;">ACTIVE</span>
<span id="t128" class="t c" style="left:1202.1px;top:462px;font-size:12.25px;line-height:18px;height:18px;color:#000;letter-spacing:0.066px;">ECLAIM Test Employee - Nayeem</span>
<span id="t129" class="t c" style="left:1434.1px;top:462px;font-size:12.25px;line-height:18px;height:18px;color:#000;letter-spacing:0.066px;">ECLAIM Test Employee - Nayeem</span>
<div class="a" style="left:244px;top:483px;width:1410px;height:28px;background:#fff;border-bottom:1px solid #dadfe5"></div>
<span id="t130" class="t c" style="left:256.4px;top:490px;font-size:12.25px;line-height:18px;height:18px;color:#000;transform:scaleX(0.9823);transform-origin:0 0;">IDA COMPANY</span>
<span id="t131" class="t c" style="left:442px;top:490px;font-size:12.25px;line-height:18px;height:18px;color:#000;transform:scaleX(0.9256);transform-origin:0 0;">PROCESSED</span>
<span id="t132" class="t c" style="left:591.2px;top:489px;font-size:12.75px;line-height:19px;height:19px;color:#000;letter-spacing:0.324px;">2025-03-13</span>
<span id="t133" class="t c" style="left:729.5px;top:489px;font-size:12.75px;line-height:19px;height:19px;color:#000;letter-spacing:0.324px;">2025-03-13</span>
<span id="t134" class="t c" style="left:870px;top:489px;font-size:12.75px;line-height:19px;height:19px;color:#000;letter-spacing:0.118px;">2025-01-01</span>
<span id="t135" class="t c" style="left:990.4px;top:489px;font-size:12.75px;line-height:19px;height:19px;color:#000;letter-spacing:0.118px;">2025-01-31</span>
<span id="t136" class="t c" style="left:1104.1px;top:490px;font-size:12.25px;line-height:18px;height:18px;color:#000;transform:scaleX(0.9401);transform-origin:0 0;">ACTIVE</span>
<span id="t137" class="t c" style="left:1202.1px;top:490px;font-size:12.25px;line-height:18px;height:18px;color:#000;letter-spacing:0.066px;">ECLAIM Test Employee - Nayeem</span>
<span id="t138" class="t c" style="left:1434.1px;top:490px;font-size:12.25px;line-height:18px;height:18px;color:#000;letter-spacing:0.066px;">ECLAIM Test Employee - Nayeem</span>
<div class="a" style="left:244px;top:511px;width:1410px;height:28px;background:#fcfdfe;border-bottom:1px solid #dadfe5"></div>
<span id="t139" class="t c" style="left:256.4px;top:518px;font-size:12.25px;line-height:18px;height:18px;color:#000;transform:scaleX(0.9823);transform-origin:0 0;">IDA COMPANY</span>
<span id="t140" class="t c" style="left:442px;top:518px;font-size:12.25px;line-height:18px;height:18px;color:#000;transform:scaleX(0.9256);transform-origin:0 0;">PROCESSED</span>
<span id="t141" class="t c" style="left:591.2px;top:517px;font-size:12.75px;line-height:19px;height:19px;color:#000;letter-spacing:0.530px;">2025-03-07</span>
<span id="t142" class="t c" style="left:729.5px;top:517px;font-size:12.75px;line-height:19px;height:19px;color:#000;letter-spacing:0.530px;">2025-03-07</span>
<span id="t143" class="t c" style="left:870px;top:517px;font-size:12.75px;line-height:19px;height:19px;color:#000;letter-spacing:0.118px;">2025-01-01</span>
<span id="t144" class="t c" style="left:990.4px;top:517px;font-size:12.75px;line-height:19px;height:19px;color:#000;letter-spacing:0.118px;">2025-01-31</span>
<span id="t145" class="t c" style="left:1104.1px;top:518px;font-size:12.25px;line-height:18px;height:18px;color:#000;transform:scaleX(0.9401);transform-origin:0 0;">ACTIVE</span>
<span id="t146" class="t c" style="left:1202.1px;top:518px;font-size:12.25px;line-height:18px;height:18px;color:#000;letter-spacing:0.066px;">ECLAIM Test Employee - Nayeem</span>
<span id="t147" class="t c" style="left:1434.1px;top:518px;font-size:12.25px;line-height:18px;height:18px;color:#000;letter-spacing:0.066px;">ECLAIM Test Employee - Nayeem</span>
<div class="a" style="left:244px;top:539px;width:1410px;height:28px;background:#fff;border-bottom:1px solid #dadfe5"></div>
<span id="t148" class="t c" style="left:256.4px;top:546px;font-size:12.25px;line-height:18px;height:18px;color:#000;transform:scaleX(0.9823);transform-origin:0 0;">IDA COMPANY</span>
<span id="t149" class="t c" style="left:442px;top:546px;font-size:12.25px;line-height:18px;height:18px;color:#000;transform:scaleX(0.9256);transform-origin:0 0;">PROCESSED</span>
<span id="t150" class="t c" style="left:591.2px;top:545px;font-size:12.75px;line-height:19px;height:19px;color:#000;letter-spacing:0.530px;">2025-03-03</span>
<span id="t151" class="t c" style="left:729.5px;top:545px;font-size:12.75px;line-height:19px;height:19px;color:#000;letter-spacing:0.530px;">2025-03-03</span>
<span id="t152" class="t c" style="left:870px;top:545px;font-size:12.75px;line-height:19px;height:19px;color:#000;letter-spacing:0.118px;">2025-01-01</span>
<span id="t153" class="t c" style="left:990.4px;top:545px;font-size:12.75px;line-height:19px;height:19px;color:#000;letter-spacing:0.118px;">2025-01-31</span>
<span id="t154" class="t c" style="left:1104.1px;top:546px;font-size:12.25px;line-height:18px;height:18px;color:#000;transform:scaleX(0.9401);transform-origin:0 0;">ACTIVE</span>
<span id="t155" class="t c" style="left:1202.1px;top:546px;font-size:12.25px;line-height:18px;height:18px;color:#000;letter-spacing:0.066px;">ECLAIM Test Employee - Nayeem</span>
<span id="t156" class="t c" style="left:1434.1px;top:546px;font-size:12.25px;line-height:18px;height:18px;color:#000;letter-spacing:0.066px;">ECLAIM Test Employee - Nayeem</span>
<div class="a" style="left:244px;top:567px;width:1410px;height:28px;background:#fcfdfe;border-bottom:1px solid #dadfe5"></div>
<span id="t157" class="t c" style="left:256.4px;top:573px;font-size:12.75px;line-height:19px;height:19px;color:#000;letter-spacing:-0.022px;">WV-EInvoice-Test</span>
<span id="t158" class="t c" style="left:442px;top:574px;font-size:12.25px;line-height:18px;height:18px;color:#000;transform:scaleX(0.9256);transform-origin:0 0;">PROCESSED</span>
<span id="t159" class="t c" style="left:591.2px;top:573px;font-size:12.75px;line-height:19px;height:19px;color:#000;letter-spacing:0.530px;">2025-02-28</span>
<span id="t160" class="t c" style="left:729.5px;top:573px;font-size:12.75px;line-height:19px;height:19px;color:#000;letter-spacing:0.530px;">2025-02-28</span>
<span id="t161" class="t c" style="left:870px;top:573px;font-size:12.75px;line-height:19px;height:19px;color:#000;letter-spacing:0.118px;">2025-01-01</span>
<span id="t162" class="t c" style="left:990.4px;top:573px;font-size:12.75px;line-height:19px;height:19px;color:#000;letter-spacing:0.118px;">2025-01-31</span>
<span id="t163" class="t c" style="left:1104.1px;top:574px;font-size:12.25px;line-height:18px;height:18px;color:#000;transform:scaleX(0.9401);transform-origin:0 0;">ACTIVE</span>
<span id="t164" class="t c" style="left:1202.1px;top:574px;font-size:12.25px;line-height:18px;height:18px;color:#000;letter-spacing:0.066px;">ECLAIM Test Employee - Nayeem</span>
<span id="t165" class="t c" style="left:1434.1px;top:574px;font-size:12.25px;line-height:18px;height:18px;color:#000;letter-spacing:0.066px;">ECLAIM Test Employee - Nayeem</span>
<div class="a" style="left:244px;top:595px;width:1410px;height:28px;background:#fff;border-bottom:1px solid #dadfe5"></div>
<span id="t166" class="t c" style="left:256.4px;top:602px;font-size:12.25px;line-height:18px;height:18px;color:#000;transform:scaleX(0.9823);transform-origin:0 0;">IDA COMPANY</span>
<span id="t167" class="t c" style="left:442px;top:602px;font-size:12.25px;line-height:18px;height:18px;color:#000;transform:scaleX(0.9256);transform-origin:0 0;">PROCESSED</span>
<span id="t168" class="t c" style="left:591.2px;top:601px;font-size:12.75px;line-height:19px;height:19px;color:#000;letter-spacing:0.530px;">2025-02-20</span>
<span id="t169" class="t c" style="left:729.5px;top:601px;font-size:12.75px;line-height:19px;height:19px;color:#000;letter-spacing:0.530px;">2025-02-20</span>
<span id="t170" class="t c" style="left:870px;top:601px;font-size:12.75px;line-height:19px;height:19px;color:#000;letter-spacing:0.118px;">2025-01-01</span>
<span id="t171" class="t c" style="left:990.4px;top:601px;font-size:12.75px;line-height:19px;height:19px;color:#000;letter-spacing:0.118px;">2025-01-31</span>
<span id="t172" class="t c" style="left:1104.1px;top:602px;font-size:12.25px;line-height:18px;height:18px;color:#000;transform:scaleX(0.9401);transform-origin:0 0;">ACTIVE</span>
<span id="t173" class="t c" style="left:1202.1px;top:602px;font-size:12.25px;line-height:18px;height:18px;color:#000;letter-spacing:0.066px;">ECLAIM Test Employee - Nayeem</span>
<span id="t174" class="t c" style="left:1434.1px;top:602px;font-size:12.25px;line-height:18px;height:18px;color:#000;letter-spacing:0.066px;">ECLAIM Test Employee - Nayeem</span>
<div class="a" style="left:244px;top:623px;width:1410px;height:28px;background:#fcfdfe;border-bottom:1px solid #dadfe5"></div>
<span id="t175" class="t c" style="left:256.4px;top:630px;font-size:12.25px;line-height:18px;height:18px;color:#000;transform:scaleX(0.9823);transform-origin:0 0;">IDA COMPANY</span>
<span id="t176" class="t c" style="left:442px;top:630px;font-size:12.25px;line-height:18px;height:18px;color:#000;transform:scaleX(0.9256);transform-origin:0 0;">PROCESSED</span>
<span id="t177" class="t c" style="left:591.2px;top:629px;font-size:12.75px;line-height:19px;height:19px;color:#000;letter-spacing:0.530px;">2025-02-20</span>
<span id="t178" class="t c" style="left:729.5px;top:629px;font-size:12.75px;line-height:19px;height:19px;color:#000;letter-spacing:0.530px;">2025-02-20</span>
<span id="t179" class="t c" style="left:870px;top:629px;font-size:12.75px;line-height:19px;height:19px;color:#000;letter-spacing:0.118px;">2025-01-01</span>
<span id="t180" class="t c" style="left:990.4px;top:629px;font-size:12.75px;line-height:19px;height:19px;color:#000;letter-spacing:0.118px;">2025-01-31</span>
<span id="t181" class="t c" style="left:1104.1px;top:630px;font-size:12.25px;line-height:18px;height:18px;color:#000;transform:scaleX(0.9401);transform-origin:0 0;">ACTIVE</span>
<span id="t182" class="t c" style="left:1202.1px;top:630px;font-size:12.25px;line-height:18px;height:18px;color:#000;letter-spacing:0.066px;">ECLAIM Test Employee - Nayeem</span>
<span id="t183" class="t c" style="left:1434.1px;top:630px;font-size:12.25px;line-height:18px;height:18px;color:#000;letter-spacing:0.066px;">ECLAIM Test Employee - Nayeem</span>
<div class="a" style="left:244px;top:651px;width:1410px;height:28px;background:#fff;border-bottom:1px solid #dadfe5"></div>
<span id="t184" class="t c" style="left:256.4px;top:658px;font-size:12.25px;line-height:18px;height:18px;color:#000;transform:scaleX(0.9823);transform-origin:0 0;">IDA COMPANY</span>
<span id="t185" class="t c" style="left:442px;top:658px;font-size:12.25px;line-height:18px;height:18px;color:#000;transform:scaleX(0.9256);transform-origin:0 0;">PROCESSED</span>
<span id="t186" class="t c" style="left:591.2px;top:657px;font-size:12.75px;line-height:19px;height:19px;color:#000;letter-spacing:0.530px;">2025-02-20</span>
<span id="t187" class="t c" style="left:729.5px;top:657px;font-size:12.75px;line-height:19px;height:19px;color:#000;letter-spacing:0.530px;">2025-02-20</span>
<span id="t188" class="t c" style="left:870px;top:657px;font-size:12.75px;line-height:19px;height:19px;color:#000;letter-spacing:0.118px;">2025-01-01</span>
<span id="t189" class="t c" style="left:990.4px;top:657px;font-size:12.75px;line-height:19px;height:19px;color:#000;letter-spacing:0.118px;">2025-01-31</span>
<span id="t190" class="t c" style="left:1104.1px;top:658px;font-size:12.25px;line-height:18px;height:18px;color:#000;transform:scaleX(0.9401);transform-origin:0 0;">ACTIVE</span>
<span id="t191" class="t c" style="left:1202.1px;top:658px;font-size:12.25px;line-height:18px;height:18px;color:#000;letter-spacing:0.066px;">ECLAIM Test Employee - Nayeem</span>
<span id="t192" class="t c" style="left:1434.1px;top:658px;font-size:12.25px;line-height:18px;height:18px;color:#000;letter-spacing:0.066px;">ECLAIM Test Employee - Nayeem</span>
<div class="a" style="left:244px;top:679px;width:1410px;height:28px;background:#fcfdfe;border-bottom:1px solid #dadfe5"></div>
<span id="t193" class="t c" style="left:256.4px;top:686px;font-size:12.25px;line-height:18px;height:18px;color:#000;transform:scaleX(0.9823);transform-origin:0 0;">IDA COMPANY</span>
<span id="t194" class="t c" style="left:442px;top:686px;font-size:12.25px;line-height:18px;height:18px;color:#000;transform:scaleX(0.9256);transform-origin:0 0;">PROCESSED</span>
<span id="t195" class="t c" style="left:591.2px;top:685px;font-size:12.75px;line-height:19px;height:19px;color:#000;letter-spacing:0.530px;">2025-02-20</span>
<span id="t196" class="t c" style="left:729.5px;top:685px;font-size:12.75px;line-height:19px;height:19px;color:#000;letter-spacing:0.530px;">2025-02-20</span>
<span id="t197" class="t c" style="left:870px;top:685px;font-size:12.75px;line-height:19px;height:19px;color:#000;letter-spacing:0.118px;">2025-01-01</span>
<span id="t198" class="t c" style="left:990.4px;top:685px;font-size:12.75px;line-height:19px;height:19px;color:#000;letter-spacing:0.118px;">2025-01-31</span>
<span id="t199" class="t c" style="left:1104.1px;top:686px;font-size:12.25px;line-height:18px;height:18px;color:#000;transform:scaleX(0.9401);transform-origin:0 0;">ACTIVE</span>
<span id="t200" class="t c" style="left:1202.1px;top:686px;font-size:12.25px;line-height:18px;height:18px;color:#000;letter-spacing:0.066px;">ECLAIM Test Employee - Nayeem</span>
<span id="t201" class="t c" style="left:1434.1px;top:686px;font-size:12.25px;line-height:18px;height:18px;color:#000;letter-spacing:0.066px;">ECLAIM Test Employee - Nayeem</span>
<div class="a" style="left:1875px;top:170px;width:1px;height:547px;background:#bdc3c7"></div>
<div class="a" style="left:1876px;top:186px;width:20px;height:1px;background:#bdc3c7"></div>
<div class="a" style="left:1876px;top:271px;width:20px;height:3px;background:linear-gradient(#e3e7ea,#cfd5d9 50%,#e3e7ea)"></div>
<div class="a" style="left:1876px;top:343px;width:20px;height:2px;background:#d9dee2"></div>
<svg style="left:1881px;top:199.500px" width="11" height="9" viewBox="0 0 11 9"><path d="M.75 0v8.500M3.700 0v8.500M6.700 0v8.500M9.700 0v8.500" stroke="#111" stroke-width="1.1"/></svg>
<div class="a" style="left:1876px;top:186px;width:20px;height:160px;overflow:hidden"><span id="t202" class="t" style="left:3.6px;top:28px;font-size:12px;line-height:18px;height:18px;color:#111;">Columns</span>
<span id="t203" class="t" style="left:3.6px;top:115px;font-size:12px;line-height:18px;height:18px;color:#111;">Filters</span>
</div>
<svg style="left:1880.3px;top:285px" width="12" height="12" viewBox="0 0 12 12"><path d="M5 6H7V8.400L5 9.600z" fill="#888"/><path d="M1.100 1.400H10.300L7.100 5.700V8.400L4.900 9.700V5.700z" fill="none" stroke="#000" stroke-width="1.100" stroke-linejoin="round"/></svg>
</div>
</body></html>
